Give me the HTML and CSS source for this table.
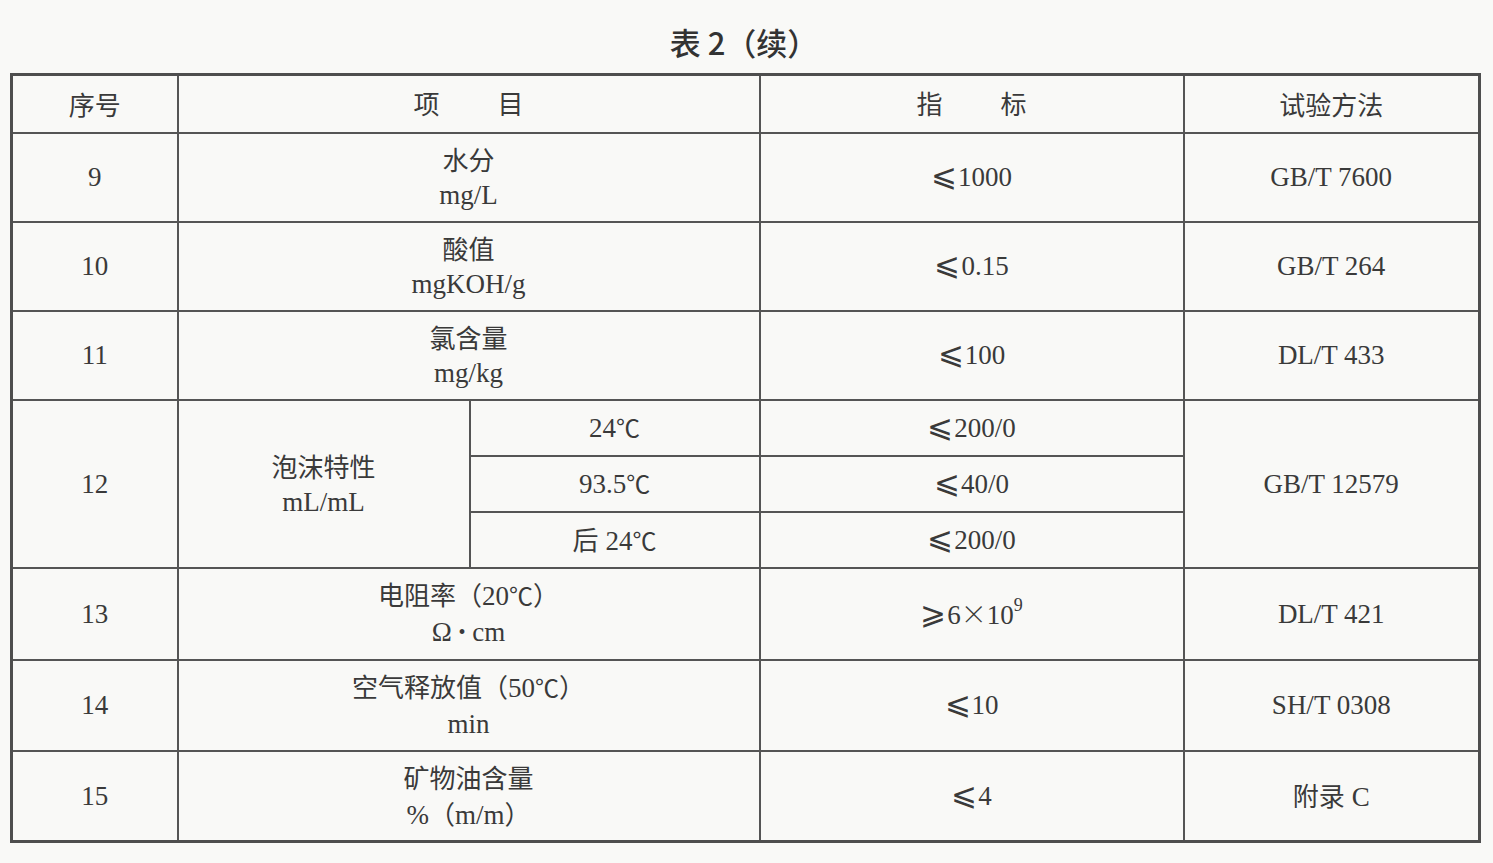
FILE: index.html
```html
<!DOCTYPE html>
<html lang="zh-CN">
<head>
<meta charset="utf-8">
<title>表2（续）</title>
<link rel="stylesheet" href="styles.css">
</head>
<body>
<div class="page">
  <div class="title">表 2（续）</div>
  <table class="spec">
    <colgroup>
      <col class="c1"><col class="c2"><col class="c3"><col class="c4"><col class="c5">
    </colgroup>
    <tr class="h-head">
      <td class="cjk">序号</td>
      <td colspan="2"><span class="spread cjk"><span>项</span><span>目</span></span></td>
      <td><span class="spread cjk"><span>指</span><span>标</span></span></td>
      <td class="cjk">试验方法</td>
    </tr>
    <tr class="h-row">
      <td>9</td>
      <td colspan="2"><div class="two"><span class="cjk">水分</span><span>mg/L</span></div></td>
      <td><span class="le">⩽</span>1000</td>
      <td>GB/T 7600</td>
    </tr>
    <tr class="h-row">
      <td>10</td>
      <td colspan="2"><div class="two"><span class="cjk">酸值</span><span>mgKOH/g</span></div></td>
      <td><span class="le">⩽</span>0.15</td>
      <td>GB/T 264</td>
    </tr>
    <tr class="h-row">
      <td>11</td>
      <td colspan="2"><div class="two"><span class="cjk">氯含量</span><span>mg/kg</span></div></td>
      <td><span class="le">⩽</span>100</td>
      <td>DL/T 433</td>
    </tr>
    <tr class="h-sub">
      <td rowspan="3">12</td>
      <td rowspan="3"><div class="two"><span class="cjk">泡沫特性</span><span>mL/mL</span></div></td>
      <td>24<span class="deg">℃</span></td>
      <td><span class="le">⩽</span>200/0</td>
      <td rowspan="3">GB/T 12579</td>
    </tr>
    <tr class="h-sub">
      <td>93.5<span class="deg">℃</span></td>
      <td><span class="le">⩽</span>40/0</td>
    </tr>
    <tr class="h-sub">
      <td><span class="cjk">后</span> 24<span class="deg">℃</span></td>
      <td><span class="le">⩽</span>200/0</td>
    </tr>
    <tr class="h-row13">
      <td>13</td>
      <td colspan="2"><div class="two"><span><span class="cjk">电阻率（</span>20<span class="deg">℃</span><span class="cjk">）</span></span><span>Ω <span class="dot">•</span> cm</span></div></td>
      <td><span class="le">⩾</span>6<span class="times">×</span>10<sup>9</sup></td>
      <td>DL/T 421</td>
    </tr>
    <tr class="h-row-low">
      <td>14</td>
      <td colspan="2"><div class="two"><span><span class="cjk">空气释放值（</span>50<span class="deg">℃</span><span class="cjk">）</span></span><span>min</span></div></td>
      <td><span class="le">⩽</span>10</td>
      <td>SH/T 0308</td>
    </tr>
    <tr class="h-row-low">
      <td>15</td>
      <td colspan="2"><div class="two"><span class="cjk">矿物油含量</span><span>%<span class="cjk">（</span>m/m<span class="cjk">）</span></span></div></td>
      <td><span class="le">⩽</span>4</td>
      <td><span class="cjk">附录</span> C</td>
    </tr>
  </table>
</div>
</body>
</html>
```

FILE: styles.css
```css
html, body {
  margin: 0;
  padding: 0;
  background: #f9f9f7;
}

body {
  width: 1493px;
  height: 863px;
  overflow: hidden;
  color: #3a3a3a;
  font-family: "Liberation Serif", "Noto Sans CJK SC", serif;
  font-size: 27px;
}

.page {
  padding-left: 10px;
}

.title {
  height: 73px;
  box-sizing: border-box;
  padding-top: 22px;
  width: 1468px;
  text-align: center;
  font-family: "Noto Sans CJK SC", sans-serif;
  font-size: 31px;
  font-weight: 500;
  line-height: 40px;
  color: #333;
}

.spec {
  width: 1468px;
  table-layout: fixed;
  border-collapse: collapse;
  border: 3px solid #4e4e4e;
}

.c1 { width: 166px; }
.c2 { width: 292px; }
.c3 { width: 290px; }
.c4 { width: 424px; }
.c5 { width: 296px; }

.spec td {
  border: 2px solid #555;
  padding: 0;
  text-align: center;
  vertical-align: middle;
  line-height: 30px;
}

.h-head { height: 58px; }
.h-row { height: 89px; }
.h-sub { height: 56px; }
.h-row13 { height: 92px; }
.h-row-low { height: 91px; }

.cjk {
  font-family: "Noto Sans CJK SC", sans-serif;
  font-weight: 400;
  font-size: 26px;
}

.spread {
  display: inline-flex;
  gap: 58px;
}

.two {
  display: flex;
  flex-direction: column;
  align-items: center;
  gap: 6px;
}

.deg {
  font-family: "Noto Sans CJK SC", sans-serif;
  font-size: 24px;
}

.le {
  font-family: "DejaVu Serif", "Noto Sans CJK SC", serif;
  font-size: 31px;
  line-height: 0;
  margin-right: 1px;
}

.times {
  font-family: "Noto Sans CJK SC", sans-serif;
  font-size: 26px;
  font-weight: 300;
}

.dot {
  font-size: 20px;
  position: relative;
  top: -2px;
}

sup {
  font-size: 18px;
  line-height: 0;
  position: relative;
  top: -3px;
}
```
